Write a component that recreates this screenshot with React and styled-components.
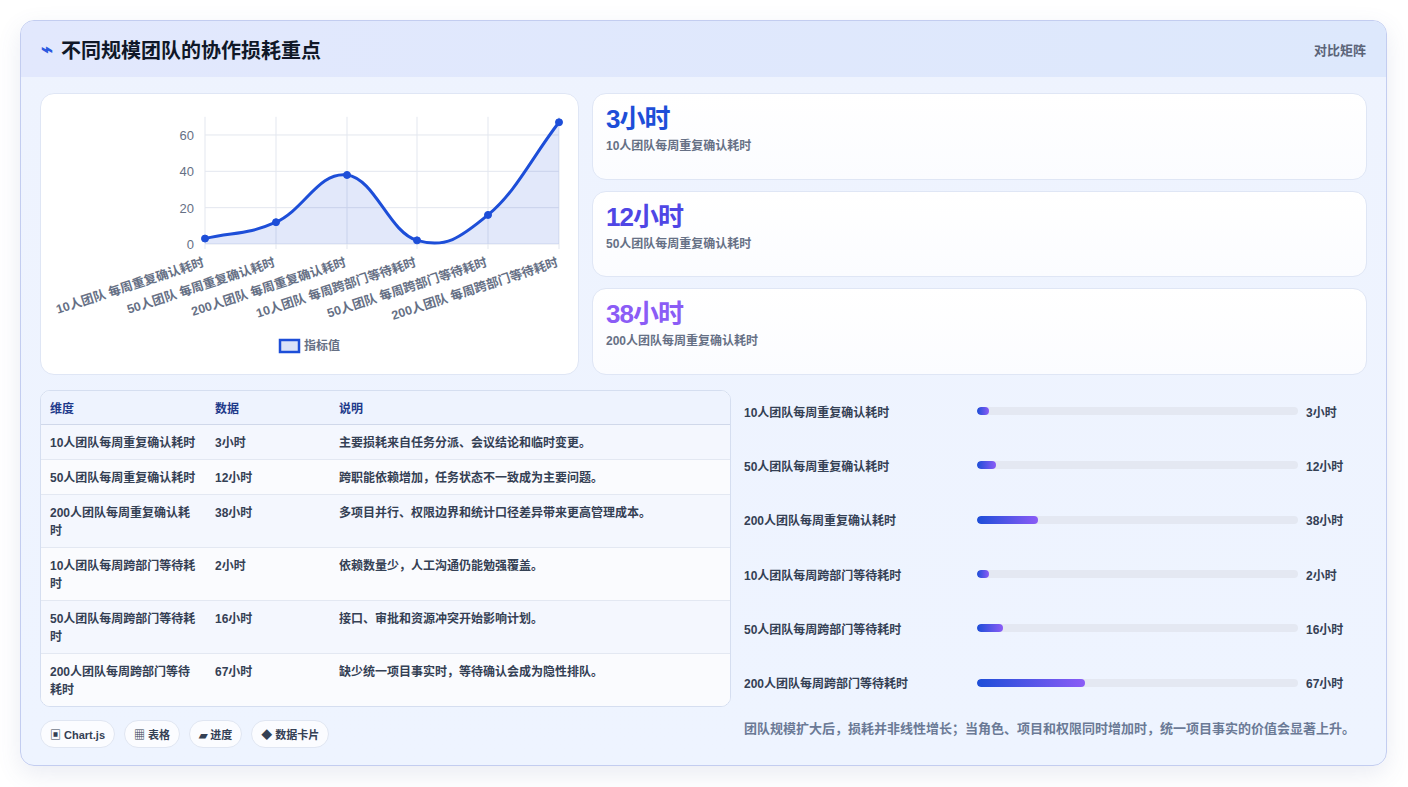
import React from "react";
import styled, { createGlobalStyle } from "styled-components";

const G = createGlobalStyle`
  html,body{margin:0;background:#fff;}
  body{font-family:"Liberation Sans","Noto Sans CJK SC",sans-serif;}
  *{box-sizing:border-box;}
`;
const Page = styled.div`padding:20px 20px 20px 20px;width:1408px;height:787px;`;
const Card = styled.div`
  width:1367px;height:746px;border:1px solid #c3cdf0;border-radius:14px;overflow:hidden;
  background:linear-gradient(180deg,#eef3fe,#eef4ff);box-shadow:0 8px 24px rgba(80,100,160,.12);
  display:flex;flex-direction:column;`;
const Header = styled.div`
  height:56px;flex:none;display:flex;align-items:center;justify-content:space-between;padding:0 20px;
  background:linear-gradient(90deg,#e2e8fd,#dde8fc);`;
const Title = styled.h1`margin:0;font-size:20px;font-weight:700;color:#101828;display:flex;align-items:center;gap:8px;`;
const Bolt = styled.span`color:#2b59e0;font-size:20px;font-weight:700;`;
const Tag = styled.span`font-size:13px;color:#5b6478;font-weight:700;`;
const Body = styled.div`flex:1;padding:16px 19px 0 19px;display:grid;grid-template-columns:539px 1fr;grid-template-rows:282px auto;column-gap:13px;row-gap:15px;`;
const Panel = styled.div`background:#fff;border:1px solid #dfe6f5;border-radius:14px;`;
const ChartPanel = styled(Panel)`overflow:hidden;`;
const Stats = styled.div`display:flex;flex-direction:column;gap:11px;`;
const Stat = styled(Panel)`flex:1;padding:10px 13px;background:linear-gradient(180deg,#fff,#fbfcff);`;
const Big = styled.div`font-size:26px;font-weight:700;letter-spacing:-1px;color:${p=>p.c};line-height:30px;`;
const Sub = styled.div`font-size:12px;font-weight:700;color:#667085;margin-top:2px;`;
const Left = styled.div`display:flex;flex-direction:column;gap:13px;margin-right:-152px;`;
const Table = styled.table`width:691px;border-collapse:separate;border-spacing:0;border:1px solid #d5def0;border-radius:10px;overflow:hidden;background:#fff;font-size:12px;font-weight:700;`;
const Th = styled.th`text-align:left;color:#1e3a8a;background:#eef3fe;padding:0 9px;height:34px;border-bottom:1px solid #d0d8ea;width:${p=>p.w}px;`;
const Tr = styled.tr`background:${p=>p.alt?"#f4f7fe":"#fafbfe"};`;
const Td = styled.td`vertical-align:top;color:#344054;padding:9px 9px 0;height:${p=>p.h}px;border-top:${p=>p.first?"none":"1px solid #e3e8f2"};line-height:18px;`;
const Pills = styled.div`display:flex;gap:9px;`;
const Pill = styled.span`height:28px;padding:0 9px;border:1px solid #e0e6f2;border-radius:14px;background:#fbfcff;font-size:11px;font-weight:700;color:#344054;display:flex;align-items:center;`;
const Right = styled.div`margin-left:152px;display:flex;flex-direction:column;`;
const Bars = styled.div`display:flex;flex-direction:column;margin-top:-6px;`;
const BarRow = styled.div`height:54.3px;display:grid;grid-template-columns:225px 321px 1fr;align-items:center;column-gap:8px;font-size:12px;font-weight:700;color:#344054;`;
const Track = styled.div`height:8px;border-radius:4px;background:#e4e8f2;overflow:hidden;`;
const Fill = styled.div`height:100%;border-radius:4px;background:linear-gradient(90deg,#1d4ed8,#8b5cf6);`;
const Note = styled.div`font-size:13px;font-weight:700;color:#6b7a96;margin-top:8px;`;

const rows=[
 ["10人团队每周重复确认耗时",3,"主要损耗来自任务分派、会议结论和临时变更。",34],
 ["50人团队每周重复确认耗时",12,"跨职能依赖增加，任务状态不一致成为主要问题。",35],
 ["200人团队每周重复确认耗时",38,"多项目并行、权限边界和统计口径差异带来更高管理成本。",53],
 ["10人团队每周跨部门等待耗时",2,"依赖数量少，人工沟通仍能勉强覆盖。",53],
 ["50人团队每周跨部门等待耗时",16,"接口、审批和资源冲突开始影响计划。",53],
 ["200人团队每周跨部门等待耗时",67,"缺少统一项目事实时，等待确认会成为隐性排队。",53],
];
const xs=[164,235,306,376,447,518];
const y=v=>150-v*1.817;
const labels=["10人团队 每周重复确认耗时","50人团队 每周重复确认耗时","200人团队 每周重复确认耗时","10人团队 每周跨部门等待耗时","50人团队 每周跨部门等待耗时","200人团队 每周跨部门等待耗时"];

function Chart(){
  const P=rows.map((r,i)=>[xs[i],y(r[1])]);
  let d=`M${P[0][0]},${P[0][1]}`;
  for(let i=0;i<P.length-1;i++){const a=P[i],b=P[i+1],dx=(b[0]-a[0])*0.4;
    const pa=P[i-1]||a,nb=P[i+2]||b;
    const s1=(b[1]-pa[1])/(b[0]-pa[0]),s2=(nb[1]-a[1])/(nb[0]-a[0]);
    d+=` C${a[0]+dx},${a[1]+s1*dx} ${b[0]-dx},${b[1]-s2*dx} ${b[0]},${b[1]}`;}
  return(
  <svg width="537" height="280" viewBox="0 0 537 280" style={{display:"block"}}>
    {[0,20,40,60].map(v=><g key={v}><line x1="164" x2="518" y1={y(v)} y2={y(v)} stroke="#e3e7ef"/><text x="153" y={y(v)+5} fontSize="13" fill="#667085" textAnchor="end">{v}</text></g>)}
    {xs.map(x=><line key={x} x1={x} x2={x} y1={y(70)} y2={y(0)+5} stroke="#e3e7ef"/>)}
    <path d={d+` L518,${y(0)} L164,${y(0)} Z`} fill="rgba(29,78,216,.13)"/>
    <path d={d} fill="none" stroke="#1d4ed8" strokeWidth="3"/>
    {P.map((p,i)=><circle key={i} cx={p[0]} cy={p[1]} r="3.5" fill="#1d4ed8" stroke="#1d4ed8"/>)}
    {labels.map((l,i)=><text key={i} x={xs[i]} y={y(0)+22} fontSize="12.5" fontWeight="700" fill="#667085" textAnchor="end" transform={`rotate(-18 ${xs[i]} ${y(0)+22})`}>{l}</text>)}
    <rect x="239" y="246" width="19" height="12" fill="#dbe3f8" stroke="#1d4ed8" strokeWidth="2.5"/>
    <text x="263" y="256" fontSize="12" fontWeight="700" fill="#667085">指标值</text>
  </svg>);
}

export default function App(){
  return(<Page><G/><Card>
    <Header><Title><Bolt>⌁</Bolt>不同规模团队的协作损耗重点</Title><Tag>对比矩阵</Tag></Header>
    <Body>
      <ChartPanel><Chart/></ChartPanel>
      <Stats>
        <Stat><Big c="#1d4ed8">3小时</Big><Sub>10人团队每周重复确认耗时</Sub></Stat>
        <Stat><Big c="#4f46e5">12小时</Big><Sub>50人团队每周重复确认耗时</Sub></Stat>
        <Stat><Big c="#8b5cf6">38小时</Big><Sub>200人团队每周重复确认耗时</Sub></Stat>
      </Stats>
      <Left>
        <Table><thead><tr><Th w={165}>维度</Th><Th w={124}>数据</Th><Th>说明</Th></tr></thead>
          <tbody>{rows.map((r,i)=><Tr key={i} alt={i%2===0}><Td h={r[3]} first={i===0}>{r[0]}</Td><Td h={r[3]} first={i===0}>{r[1]}小时</Td><Td h={r[3]} first={i===0}>{r[2]}</Td></Tr>)}</tbody>
        </Table>
        <Pills><Pill>▣ Chart.js</Pill><Pill>▦ 表格</Pill><Pill>▰ 进度</Pill><Pill>◆ 数据卡片</Pill></Pills>
      </Left>
      <Right>
        <Bars>{rows.map((r,i)=><BarRow key={i}><span>{r[0]}</span><Track><Fill style={{width:Math.max(12,r[1]/200*321)}}/></Track><span>{r[1]}小时</span></BarRow>)}</Bars>
        <Note>团队规模扩大后，损耗并非线性增长；当角色、项目和权限同时增加时，统一项目事实的价值会显著上升。</Note>
      </Right>
    </Body>
  </Card></Page>);
}
